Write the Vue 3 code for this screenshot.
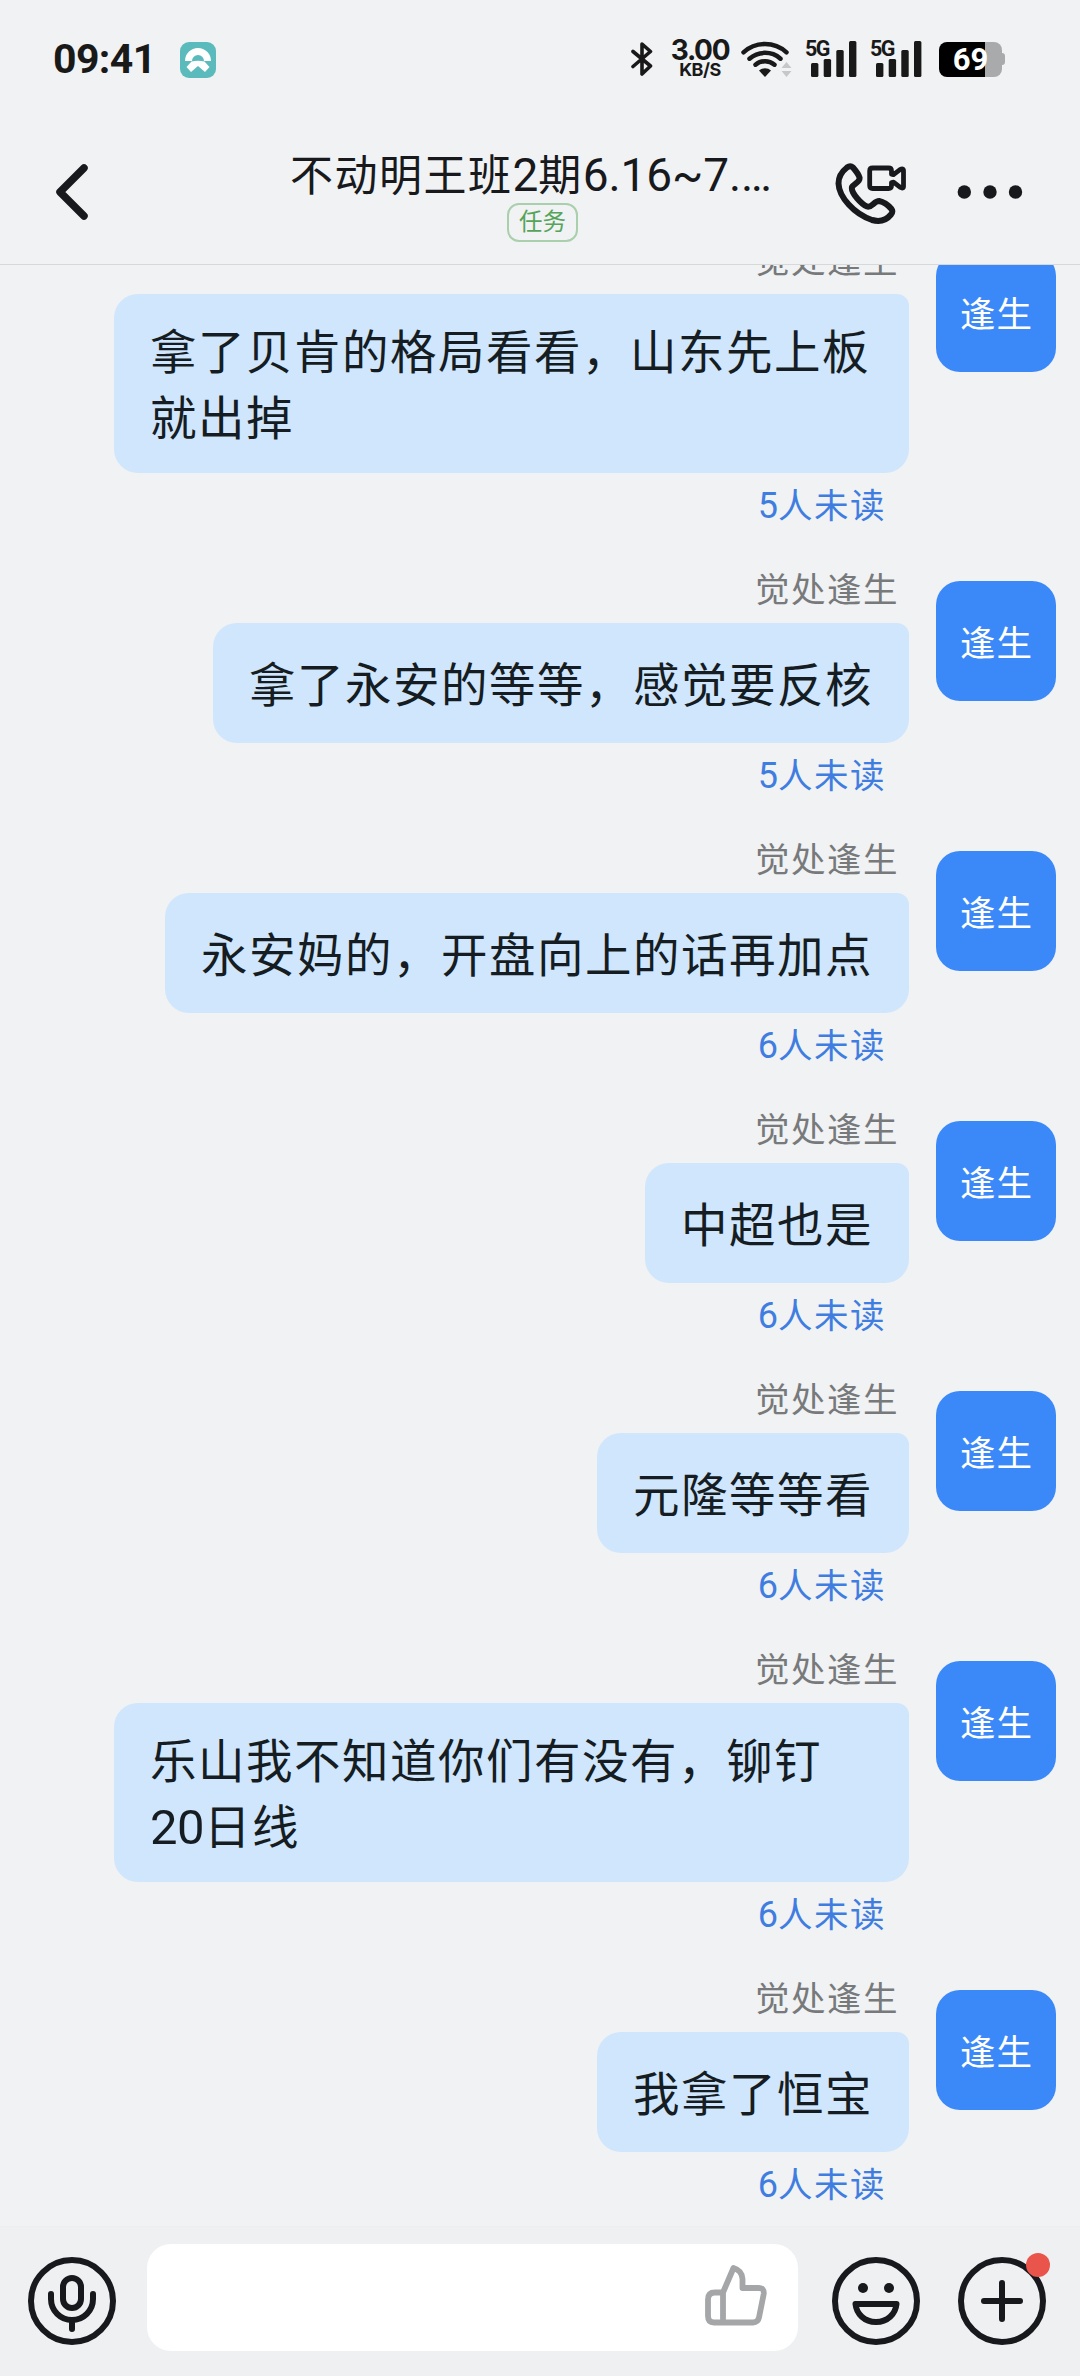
<script setup>
const messages = [
  { lines: ['拿了贝肯的格局看看，山东先上板', '就出掉'], unread: 5 },
  { lines: ['拿了永安的等等，感觉要反核'], unread: 5 },
  { lines: ['永安妈的，开盘向上的话再加点'], unread: 6 },
  { lines: ['中超也是'], unread: 6 },
  { lines: ['元隆等等看'], unread: 6 },
  { lines: ['乐山我不知道你们有没有，铆钉', '20日线'], unread: 6 },
  { lines: ['我拿了恒宝'], unread: 6 },
]

// Latin runs use a slightly larger face than the surrounding Chinese text
const runs = (text) =>
  text
    .split(/([\x20-\x7e…]+)/)
    .filter(Boolean)
    .map((t) => ({ t, latin: /^[\x20-\x7e…]/.test(t) }))

const title = runs('不动明王班2期6.16~7.…')
const signals = [1, 2]
</script>

<template>
  <div class="screen">
    <div class="status">
      <span class="clock">09:41</span>
      <svg class="app-badge" width="36" height="36" viewBox="0 0 36 36">
        <rect width="36" height="36" rx="9" fill="#5bbbbc" />
        <path d="M5 19a13 13 0 0 1 26 0h-7a6 6 0 0 0-12 0z" fill="#fff" />
        <path d="M11.500 19.500Q18 18 24.500 19.500L29.500 25 25 30 18 24 11 30 6.500 25z" fill="#fff" />
      </svg>
      <div class="status-right">
        <svg class="bt" width="22" height="36" viewBox="0 0 22 36">
          <path d="M2 10.500 19.500 25 11 33V3l8.500 7.500L2 25.500" fill="none" stroke="#191919" stroke-width="3.600" stroke-linejoin="round" stroke-linecap="round" />
        </svg>
        <div class="speed"><b>3.00</b><i>KB/S</i></div>
        <svg class="wifi" width="52" height="36" viewBox="0 0 52 36">
          <g fill="none" stroke="#191919" stroke-width="4.500" stroke-linecap="round">
            <path d="M3.500 11.300a32 32 0 0 1 43 0" />
            <path d="M9.500 17.700a23.500 23.500 0 0 1 31 0" />
            <path d="M15.500 23.700a15 15 0 0 1 19 0" />
          </g>
          <path d="M25 36l-6-6.500a9 9 0 0 1 12 0z" fill="#191919" />
          <path d="M41.500 27l5-6 5 6zM41.500 30h10l-5 6z" fill="#c6c7c8" />
        </svg>
        <div v-for="s in signals" :key="s" class="signal">
          <span>5G</span>
          <svg width="46" height="36" viewBox="0 0 46 36" fill="#191919">
            <rect x="0" y="22" width="7.400" height="14" rx="1.500" />
            <rect x="12.700" y="18" width="7.400" height="18" rx="1.500" />
            <rect x="25.300" y="9" width="7.400" height="27" rx="1.500" />
            <rect x="38" y="0" width="7.400" height="36" rx="1.500" />
          </svg>
        </div>
        <div class="battery"><span>69</span></div>
      </div>
    </div>

    <header class="header">
      <svg class="back" width="40" height="60" viewBox="0 0 40 60">
        <path d="M32 6 8 30l24 24" fill="none" stroke="#17191c" stroke-width="7.500" stroke-linecap="round" stroke-linejoin="round" />
      </svg>
      <div class="heading">
        <h1><span v-for="(r, i) in title" :key="i" :class="{ latin: r.latin }">{{ r.t }}</span></h1>
        <span class="tag">任务</span>
      </div>
      <svg class="call" width="72" height="62" viewBox="0 0 72 62" fill="none" stroke="#17191c" stroke-width="6" stroke-linejoin="round">
        <path d="M12 4.500C14 3 16 2.700 18 4.500C21 8 23.500 11 24.500 14.500C25.500 19 19 20.500 17 24C15.500 30 27 41.500 32 43.500C37 45 39 38 44 38C49 39 53.500 42.500 56.500 46C58 48 57.500 49.500 56 51.500C51.500 57 45.500 59.500 37 57C19 51 4 34 3.500 20.500C3.500 13.500 7.500 8 12 4.500Z" />
        <path stroke-width="4.800" d="M56.500 19.500v3q0 3-3 3H37.700q-3 0-3-3V8q0-3 3-3h15.800q3 0 3 3v3.200l2 .5 6.500-5q3.500-2 3.500 1v15.500q0 3-3.500 1l-6.500-5z" />
      </svg>
      <svg class="more" width="66" height="16" viewBox="0 0 66 16" fill="#17191c">
        <circle cx="7.300" cy="8" r="6.700" /><circle cx="33" cy="8" r="6.700" /><circle cx="58.500" cy="8" r="6.700" />
      </svg>
    </header>

    <main class="list">
      <div v-for="(m, i) in messages" :key="i" class="row">
        <div class="body">
          <div class="name">觉处逢生</div>
          <div class="bubble">
            <p v-for="(line, j) in m.lines" :key="j"><span v-for="(r, k) in runs(line)" :key="k" :class="{ latin: r.latin }">{{ r.t }}</span></p>
          </div>
          <div class="unread"><span class="num">{{ m.unread }}</span>人未读</div>
        </div>
        <div class="avatar">逢生</div>
      </div>
    </main>

    <footer class="composer">
      <svg class="mic" width="88" height="88" viewBox="0 0 88 88" fill="none" stroke="#17191c" stroke-width="6" stroke-linecap="round">
        <circle cx="44" cy="44" r="41" />
        <rect x="35" y="21" width="18" height="30" rx="9" />
        <path d="M23 37v5a21 21 0 0 0 42 0v-5M44 64v8" />
      </svg>
      <div class="input">
        <svg width="62" height="62" viewBox="0 0 62 62" fill="none" stroke="#a5a6a7" stroke-width="5.800" stroke-linejoin="round">
          <path d="M18 27.500H10q-7 0-7 7V51q0 6.500 6 6.500H48q5 0 6-5L58.700 29q.8-6-5-6H37.500V14Q37 5.500 28.500 3L18 27.500V57" />
        </svg>
      </div>
      <svg class="smile" width="88" height="88" viewBox="0 0 88 88" fill="none" stroke="#17191c" stroke-width="6" stroke-linejoin="round">
        <circle cx="44" cy="44" r="41" />
        <circle cx="31" cy="31" r="5" fill="#17191c" stroke="none" />
        <circle cx="57" cy="31" r="5" fill="#17191c" stroke="none" />
        <path d="M23.500 47h41c-1 10-9 18-20.500 18s-19.500-8-20.500-18z" />
      </svg>
      <div class="plus">
        <svg width="88" height="88" viewBox="0 0 88 88" fill="none" stroke="#17191c" stroke-width="6" stroke-linecap="round">
          <circle cx="44" cy="44" r="41" />
          <path d="M26 44h36M44 26v36" />
        </svg>
        <i class="dot"></i>
      </div>
    </footer>
  </div>
</template>

<style>
body {
  background: #f0f2f5;
}
</style>

<style scoped>
.screen {
  width: 1080px;
  height: 2376px;
  display: flex;
  flex-direction: column;
  overflow: hidden;
  background: #f0f2f4;
  font-family: Roboto, 'Noto Sans CJK SC', sans-serif;
  color: #17191c;
}
svg {
  display: block;
  flex: none;
}
.status {
  display: flex;
  align-items: center;
  height: 120px;
  padding: 0 0 2px 53px;
  box-sizing: border-box;
  flex: none;
  color: #191919;
}
.app-badge {
  margin-top: 2px;
}
.clock {
  width: 127px;
  font-size: 41px;
  font-weight: 700;
  letter-spacing: -0.6px;
  line-height: 48px;
  white-space: nowrap;
}
.status-right {
  display: flex;
  align-items: center;
  height: 36px;
  margin-left: auto;
  padding-right: 78px;
}
.speed {
  width: 60px;
  margin: 0 10px 0 17px;
  text-align: center;
  white-space: nowrap;
}
.speed b,
.speed i {
  display: block;
  font-family: Inter, sans-serif;
  font-style: normal;
}
.speed b {
  font-weight: 700;
  font-size: 28px;
  letter-spacing: -1.3px;
  line-height: 21px;
}
.speed i {
  font-weight: 700;
  font-size: 18px;
  letter-spacing: -0.5px;
  line-height: 17px;
}
.signal {
  position: relative;
  width: 52px;
  height: 36px;
  margin-left: 13px;
  display: flex;
  justify-content: flex-end;
}
.signal span {
  position: absolute;
  left: 0;
  top: -2px;
  font-size: 21.5px;
  line-height: 20px;
  font-weight: 700;
  letter-spacing: -1.5px;
}
.battery {
  position: relative;
  width: 63px;
  height: 35px;
  margin-left: 17px;
  border-radius: 8px;
  background: linear-gradient(90deg, #000 46px, #a9aaab 46px);
}
.battery::after {
  content: '';
  position: absolute;
  right: -3px;
  top: 11px;
  width: 3px;
  height: 12px;
  border-radius: 0 3px 3px 0;
  background: #a9aaab;
}
.battery span {
  display: block;
  text-align: center;
  font-size: 31px;
  font-weight: 700;
  line-height: 36px;
  color: #fff;
}
.header {
  display: flex;
  align-items: center;
  height: 145px;
  box-sizing: border-box;
  border-bottom: 1px solid #d6d8da;
  flex: none;
}
.back {
  margin-left: 52px;
}
.heading {
  width: 501px;
  height: 144px;
  margin-left: 198px;
  flex: none;
}
h1 {
  margin: 0;
  padding-top: 26px;
  font-size: 43px;
  font-weight: 400;
  letter-spacing: 1.5px;
  line-height: 58px;
  height: 58px;
  white-space: nowrap;
}
h1 .latin {
  font-size: 46px;
  letter-spacing: -0.1px;
}
.tag {
  display: block;
  width: 71px;
  height: 39px;
  box-sizing: border-box;
  margin: -1px 0 0 217px;
  border: 2px solid #a9cfac;
  border-radius: 12px;
  text-align: center;
  font-size: 23.5px;
  line-height: 34px;
  color: #55a459;
}
.call {
  margin: 3px 0 0 44px;
}
.more {
  margin-left: 50px;
}
.list {
  flex: 1;
  min-height: 0;
  overflow: hidden;
}
.row {
  display: flex;
  justify-content: flex-end;
  padding: 0 24px 32px 0;
}
.row:first-child {
  margin-top: -25px;
}
.body {
  display: flex;
  flex-direction: column;
  align-items: flex-end;
}
.name {
  height: 40px;
  line-height: 43px;
  margin: 0 10px 14px 0;
  font-size: 34.5px;
  letter-spacing: 1.5px;
  color: #77797b;
}
.bubble {
  display: flex;
  flex-direction: column;
  justify-content: center;
  min-height: 120px;
  max-width: 795px;
  box-sizing: border-box;
  padding: 26px 36px 21px;
  border-radius: 24px 12px 24px 24px;
  background: #d0e6fd;
  color: #151d23;
}
.bubble p {
  margin: 0;
  font-size: 46.5px;
  letter-spacing: 1.5px;
  line-height: 66px;
  height: 66px;
  white-space: nowrap;
}
.row .bubble:has(p + p) {
  width: 795px;
}
.bubble .latin {
  font-size: 49px;
  letter-spacing: -0.5px;
}
.unread {
  height: 64px;
  line-height: 67px;
  margin-right: 23px;
  font-size: 34.5px;
  letter-spacing: 1.5px;
  color: #3f7de0;
}
.num {
  font-size: 36px;
  letter-spacing: 0;
}
.avatar {
  width: 120px;
  height: 120px;
  margin: 12px 0 0 27px;
  border-radius: 24px;
  background: #3b88f8;
  color: #fff;
  font-size: 35.5px;
  letter-spacing: 1px;
  text-indent: 1px;
  line-height: 126px;
  text-align: center;
}
.composer {
  display: flex;
  align-items: center;
  height: 150px;
  box-sizing: border-box;
  border-top: 1px solid #edeef0;
  background: #eff0f2;
  padding: 0 34px 1px 28px;
  flex: none;
}
.input {
  display: flex;
  align-items: center;
  justify-content: flex-end;
  width: 651px;
  height: 107px;
  margin: 0 34px 7px 31px;
  padding: 0 31px 4px 0;
  box-sizing: border-box;
  border-radius: 24px;
  background: #fff;
  flex: none;
}
.plus {
  position: relative;
  margin-left: 38px;
}
.dot {
  position: absolute;
  left: 68px;
  top: -4px;
  width: 24px;
  height: 24px;
  border-radius: 50%;
  background: #e9544b;
}
</style>
